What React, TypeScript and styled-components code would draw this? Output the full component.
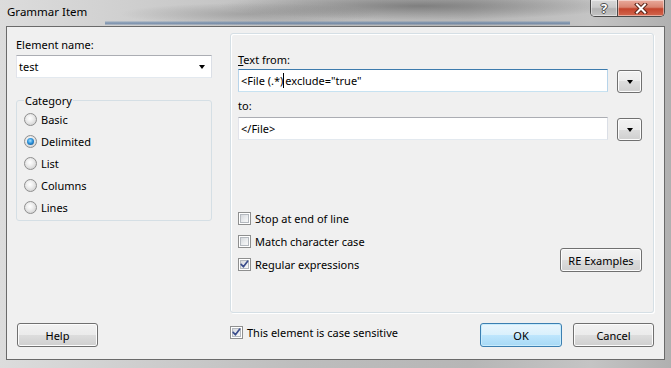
import React from "react";
import styled, { createGlobalStyle, css } from "styled-components";

const FONT = `"Noto Sans", "DejaVu Sans", sans-serif`;

const Global = createGlobalStyle`
  html, body { margin: 0; padding: 0; overflow: hidden; background: #a8a8a8; }
  body { font-family: ${FONT}; font-size: 11px; color: #000; }
  * { box-sizing: border-box; }
`;

const Window = styled.div`
  width: 671px;
  height: 368px;
  display: flex;
  flex-direction: column;
  background:
    linear-gradient(to bottom, rgba(0,0,0,0) 0, rgba(0,0,0,0) 21px, rgba(96,130,170,.55) 22px, rgba(70,105,150,.6) 24px, rgba(0,0,0,0) 25px) 105px 0 / 465px 100% no-repeat,
    radial-gradient(ellipse 200px 14px at 420px 6px, rgba(70,70,70,.5), rgba(70,70,70,0)),
    radial-gradient(ellipse 130px 11px at 250px 14px, rgba(100,100,100,.35), rgba(100,100,100,0)),
    linear-gradient(to right, #dcdcdc 0, #d2d2d2 15%, #bdbdbd 45%, #b6b6b6 70%, #c4c4c4 88%, #b0b0b0 100%);
`;

const TitleBar = styled.div`
  height: 26px;
  display: flex;
  align-items: flex-start;
  flex: none;
`;

const Title = styled.div`
  padding: 4px 0 0 7px;
  line-height: 16px;
  font-size: 11.5px;
  color: #000;
`;

const Caption = styled.div`
  margin-left: auto;
  margin-right: 6px;
  display: flex;
  height: 17px;
  border: 1px solid #4a4a4a;
  border-top: none;
  border-radius: 0 0 5px 5px;
  overflow: hidden;
`;

const CapButton = styled.div<{ $kind: "help" | "close" }>`
  height: 100%;
  display: flex;
  align-items: center;
  justify-content: center;
  box-shadow: inset 0 0 0 1px rgba(255,255,255,.45);
  ${(p) =>
    p.$kind === "help"
      ? css`
          width: 27px;
          background: linear-gradient(#d8d8d8, #c9c9c9 45%, #b2b2b2 55%, #c4c4c4);
          border-right: 1px solid #4a4a4a;
        `
      : css`
          width: 46px;
          background: linear-gradient(#e9aa9c, #d98471 45%, #c4442d 55%, #d3674e);
        `}
`;

const HelpGlyph = styled.span`
  font-family: ${FONT};
  font-weight: bold;
  font-size: 13px;
  line-height: 13px;
  color: #fff;
  text-shadow: 0 0 1px #333, 1px 0 0 #555, -1px 0 0 #555, 0 1px 0 #555, 0 -1px 0 #555;
`;

const Client = styled.div`
  flex: 1;
  margin: 0 6px 8px 6px;
  border: 1px solid #6a6a6a;
  background: #f0f0f0;
  display: flex;
  flex-direction: column;
  padding: 6px 10px 12px 9px;
`;

const Columns = styled.div<{ $h?: number; $mt?: number }>`
  display: grid;
  grid-template-columns: 196px 1fr;
  column-gap: 18px;
  margin-top: ${(p) => p.$mt ?? 0}px;
  ${(p) => p.$h && css`height: ${p.$h}px;`}
`;

const LeftCol = styled.div`
  display: flex;
  flex-direction: column;
`;

const Label = styled.div<{ $mt?: number }>`
  line-height: 15px;
  margin-top: ${(p) => p.$mt ?? 0}px;
  white-space: nowrap;
`;

const Combo = styled.div`
  margin-top: 3px;
  height: 23px;
  background: #fff;
  border: 1px solid;
  border-color: #abadb3 #dbdfe6 #e3e9ef #e2e3ea;
  display: flex;
  align-items: center;
  justify-content: space-between;
  padding: 0 6px 0 2px;
`;

const Arrow = styled.span`
  width: 0;
  height: 0;
  border-left: 3.5px solid transparent;
  border-right: 3.5px solid transparent;
  border-top: 4px solid #000;
`;

const Group = styled.fieldset`
  margin: 15px 0 0 0;
  padding: 0 7px 2px 7px;
  min-width: 0;
  border: 1px solid #d5dfe5;
  border-radius: 3px;
`;

const Legend = styled.legend`
  padding: 0 1px;
  margin-left: 0;
  line-height: 15px;
`;

const OptionRow = styled.div<{ $h: number }>`
  height: ${(p) => p.$h}px;
  display: flex;
  align-items: center;
  gap: 4px;
  white-space: nowrap;
`;

const RadioDot = styled.span<{ $on?: boolean }>`
  width: 13px;
  height: 13px;
  flex: none;
  border-radius: 50%;
  border: 1px solid #8f8f8f;
  background: radial-gradient(circle at 45% 40%, #ffffff 0, #efefef 35%, #d6d6d6 75%, #c4c4c4 100%);
  display: flex;
  align-items: center;
  justify-content: center;
  ${(p) =>
    p.$on &&
    css`
      &::after {
        content: "";
        width: 7px;
        height: 7px;
        border-radius: 50%;
        background: radial-gradient(circle at 45% 40%, #a9e2ff 0, #2c93dc 45%, #11497f 95%);
      }
    `}
`;

const CheckBox = styled.span`
  width: 13px;
  height: 13px;
  flex: none;
  border: 1px solid #8e8f8f;
  background: #fff;
  padding: 1px;
  display: flex;
`;

const CheckInner = styled.span`
  flex: 1;
  border: 1px solid #b4b9bf;
  background: linear-gradient(135deg, #d6d9dd 0, #eceef0 60%, #f8f8f8 100%);
  position: relative;
`;

const CheckSvg = styled.svg`
  position: absolute;
  left: -3px;
  top: -3px;
  overflow: visible;
`;

const RightGroup = styled.div`
  border: 1px solid #d5dfe5;
  border-radius: 3px;
  box-shadow: inset 1px 1px 0 #fff, 1px 1px 0 #fff;
  display: flex;
  flex-direction: column;
  padding: 18px 11px 36px 7px;
`;

const InputRow = styled.div<{ $mt: number }>`
  margin-top: ${(p) => p.$mt}px;
  display: flex;
  gap: 9px;
`;

const TextInput = styled.div<{ $focus?: boolean }>`
  flex: 1;
  height: 23px;
  background: #fff;
  border: 1px solid;
  border-color: ${(p) =>
    p.$focus ? "#3d7bad #b7d4ea #c7e2f1 #b7d4ea" : "#abadb3 #dbdfe6 #e3e9ef #e2e3ea"};
  display: flex;
  align-items: center;
  padding-left: 2px;
  white-space: nowrap;
`;

const Caret = styled.span`
  display: inline-block;
  width: 1px;
  height: 15px;
  background: #000;
  margin: 0 1px 0 0;
`;

const buttonBase = css`
  height: 24px;
  border: 1px solid #707070;
  border-radius: 3px;
  background: linear-gradient(#f2f2f2 0, #ebebeb 50%, #dddddd 50%, #cfcfcf 100%);
  box-shadow: inset 0 0 0 1px #fcfcfc;
  display: flex;
  align-items: center;
  justify-content: center;
  font-family: ${FONT};
  font-size: 11px;
  color: #000;
  padding: 0;
  flex: none;
`;

const DropButton = styled.div`
  ${buttonBase};
  width: 25px;
  height: 23px;
  margin-top: 1px;
  padding-top: 1px;
`;

const PushButton = styled.div<{ $w: number; $default?: boolean; $ml?: number; $mb?: number; $auto?: boolean }>`
  ${buttonBase};
  width: ${(p) => p.$w}px;
  margin-left: ${(p) => (p.$auto ? "auto" : `${p.$ml ?? 0}px`)};
  margin-bottom: ${(p) => p.$mb ?? 0}px;
  ${(p) =>
    p.$default &&
    css`
      border-color: #3c7fb1;
      background: linear-gradient(#eaf6fd 0, #d9f0fc 50%, #bee6fd 50%, #a7d9f5 100%);
      box-shadow: inset 0 0 0 1px #c8ecfd;
    `}
`;

const Options = styled.div`
  margin-top: auto;
  display: flex;
  align-items: flex-end;
  justify-content: space-between;
`;

const CheckList = styled.div`
  display: flex;
  flex-direction: column;
`;

const BottomRight = styled.div`
  display: flex;
  align-items: flex-start;
`;

const CaseCheck = styled(OptionRow)`
  margin-top: 2px;
`;

const Check = ({ checked }: { checked?: boolean }) => (
  <CheckBox>
    <CheckInner>
      {checked && (
        <CheckSvg width="13" height="13" viewBox="0 0 13 13">
          <path d="M3.2 6.4 L5.4 8.8 L9.6 3.2" fill="none" stroke="#3a4d8c" strokeWidth="1.7" strokeLinecap="round" strokeLinejoin="round" />
        </CheckSvg>
      )}
    </CheckInner>
  </CheckBox>
);

const CheckOption = ({ label, checked }: { label: string; checked?: boolean }) => (
  <OptionRow $h={23}>
    <Check checked={checked} />
    <span>{label}</span>
  </OptionRow>
);

const categories = ["Basic", "Delimited", "List", "Columns", "Lines"];

export default function App() {
  return (
    <>
      <Global />
      <Window>
        <TitleBar>
          <Title>Grammar Item</Title>
          <Caption>
            <CapButton $kind="help">
              <HelpGlyph>?</HelpGlyph>
            </CapButton>
            <CapButton $kind="close">
              <svg width="14" height="11" viewBox="0 0 14 11">
                <path d="M3 1.5 L11 9.5 M11 1.5 L3 9.5" stroke="#5a2418" strokeWidth="4" strokeLinecap="square" />
                <path d="M3 1.5 L11 9.5 M11 1.5 L3 9.5" stroke="#ffffff" strokeWidth="2" strokeLinecap="square" />
              </svg>
            </CapButton>
          </Caption>
        </TitleBar>
        <Client>
          <Columns $h={280}>
            <LeftCol>
              <Label $mt={4}>Element name:</Label>
              <Combo>
                <span>test</span>
                <Arrow />
              </Combo>
              <Group>
                <Legend>Category</Legend>
                {categories.map((c) => (
                  <OptionRow key={c} $h={22}>
                    <RadioDot $on={c === "Delimited"} />
                    <span>{c}</span>
                  </OptionRow>
                ))}
              </Group>
            </LeftCol>
            <RightGroup>
              <Label>
                <u>T</u>ext from:
              </Label>
              <InputRow $mt={2}>
                <TextInput $focus>
                  <span>&lt;File (.*)</span>
                  <Caret />
                  <span>exclude="true"</span>
                </TextInput>
                <DropButton>
                  <Arrow />
                </DropButton>
              </InputRow>
              <Label $mt={5}>to:</Label>
              <InputRow $mt={4}>
                <TextInput>&lt;/File&gt;</TextInput>
                <DropButton>
                  <Arrow />
                </DropButton>
              </InputRow>
              <Options>
                <CheckList>
                  <CheckOption label="Stop at end of line" />
                  <CheckOption label="Match character case" />
                  <CheckOption label="Regular expressions" checked />
                </CheckList>
                <PushButton $w={82} $mb={4}>RE Examples</PushButton>
              </Options>
            </RightGroup>
          </Columns>
          <Columns $mt={10}>
            <div>
              <PushButton $w={81} $ml={1}>Help</PushButton>
            </div>
            <BottomRight>
              <CaseCheck $h={15}>
                <Check checked />
                <span>This element is case sensitive</span>
              </CaseCheck>
              <PushButton $w={82} $default $auto>OK</PushButton>
              <PushButton $w={81} $ml={11}>Cancel</PushButton>
            </BottomRight>
          </Columns>
        </Client>
      </Window>
    </>
  );
}
